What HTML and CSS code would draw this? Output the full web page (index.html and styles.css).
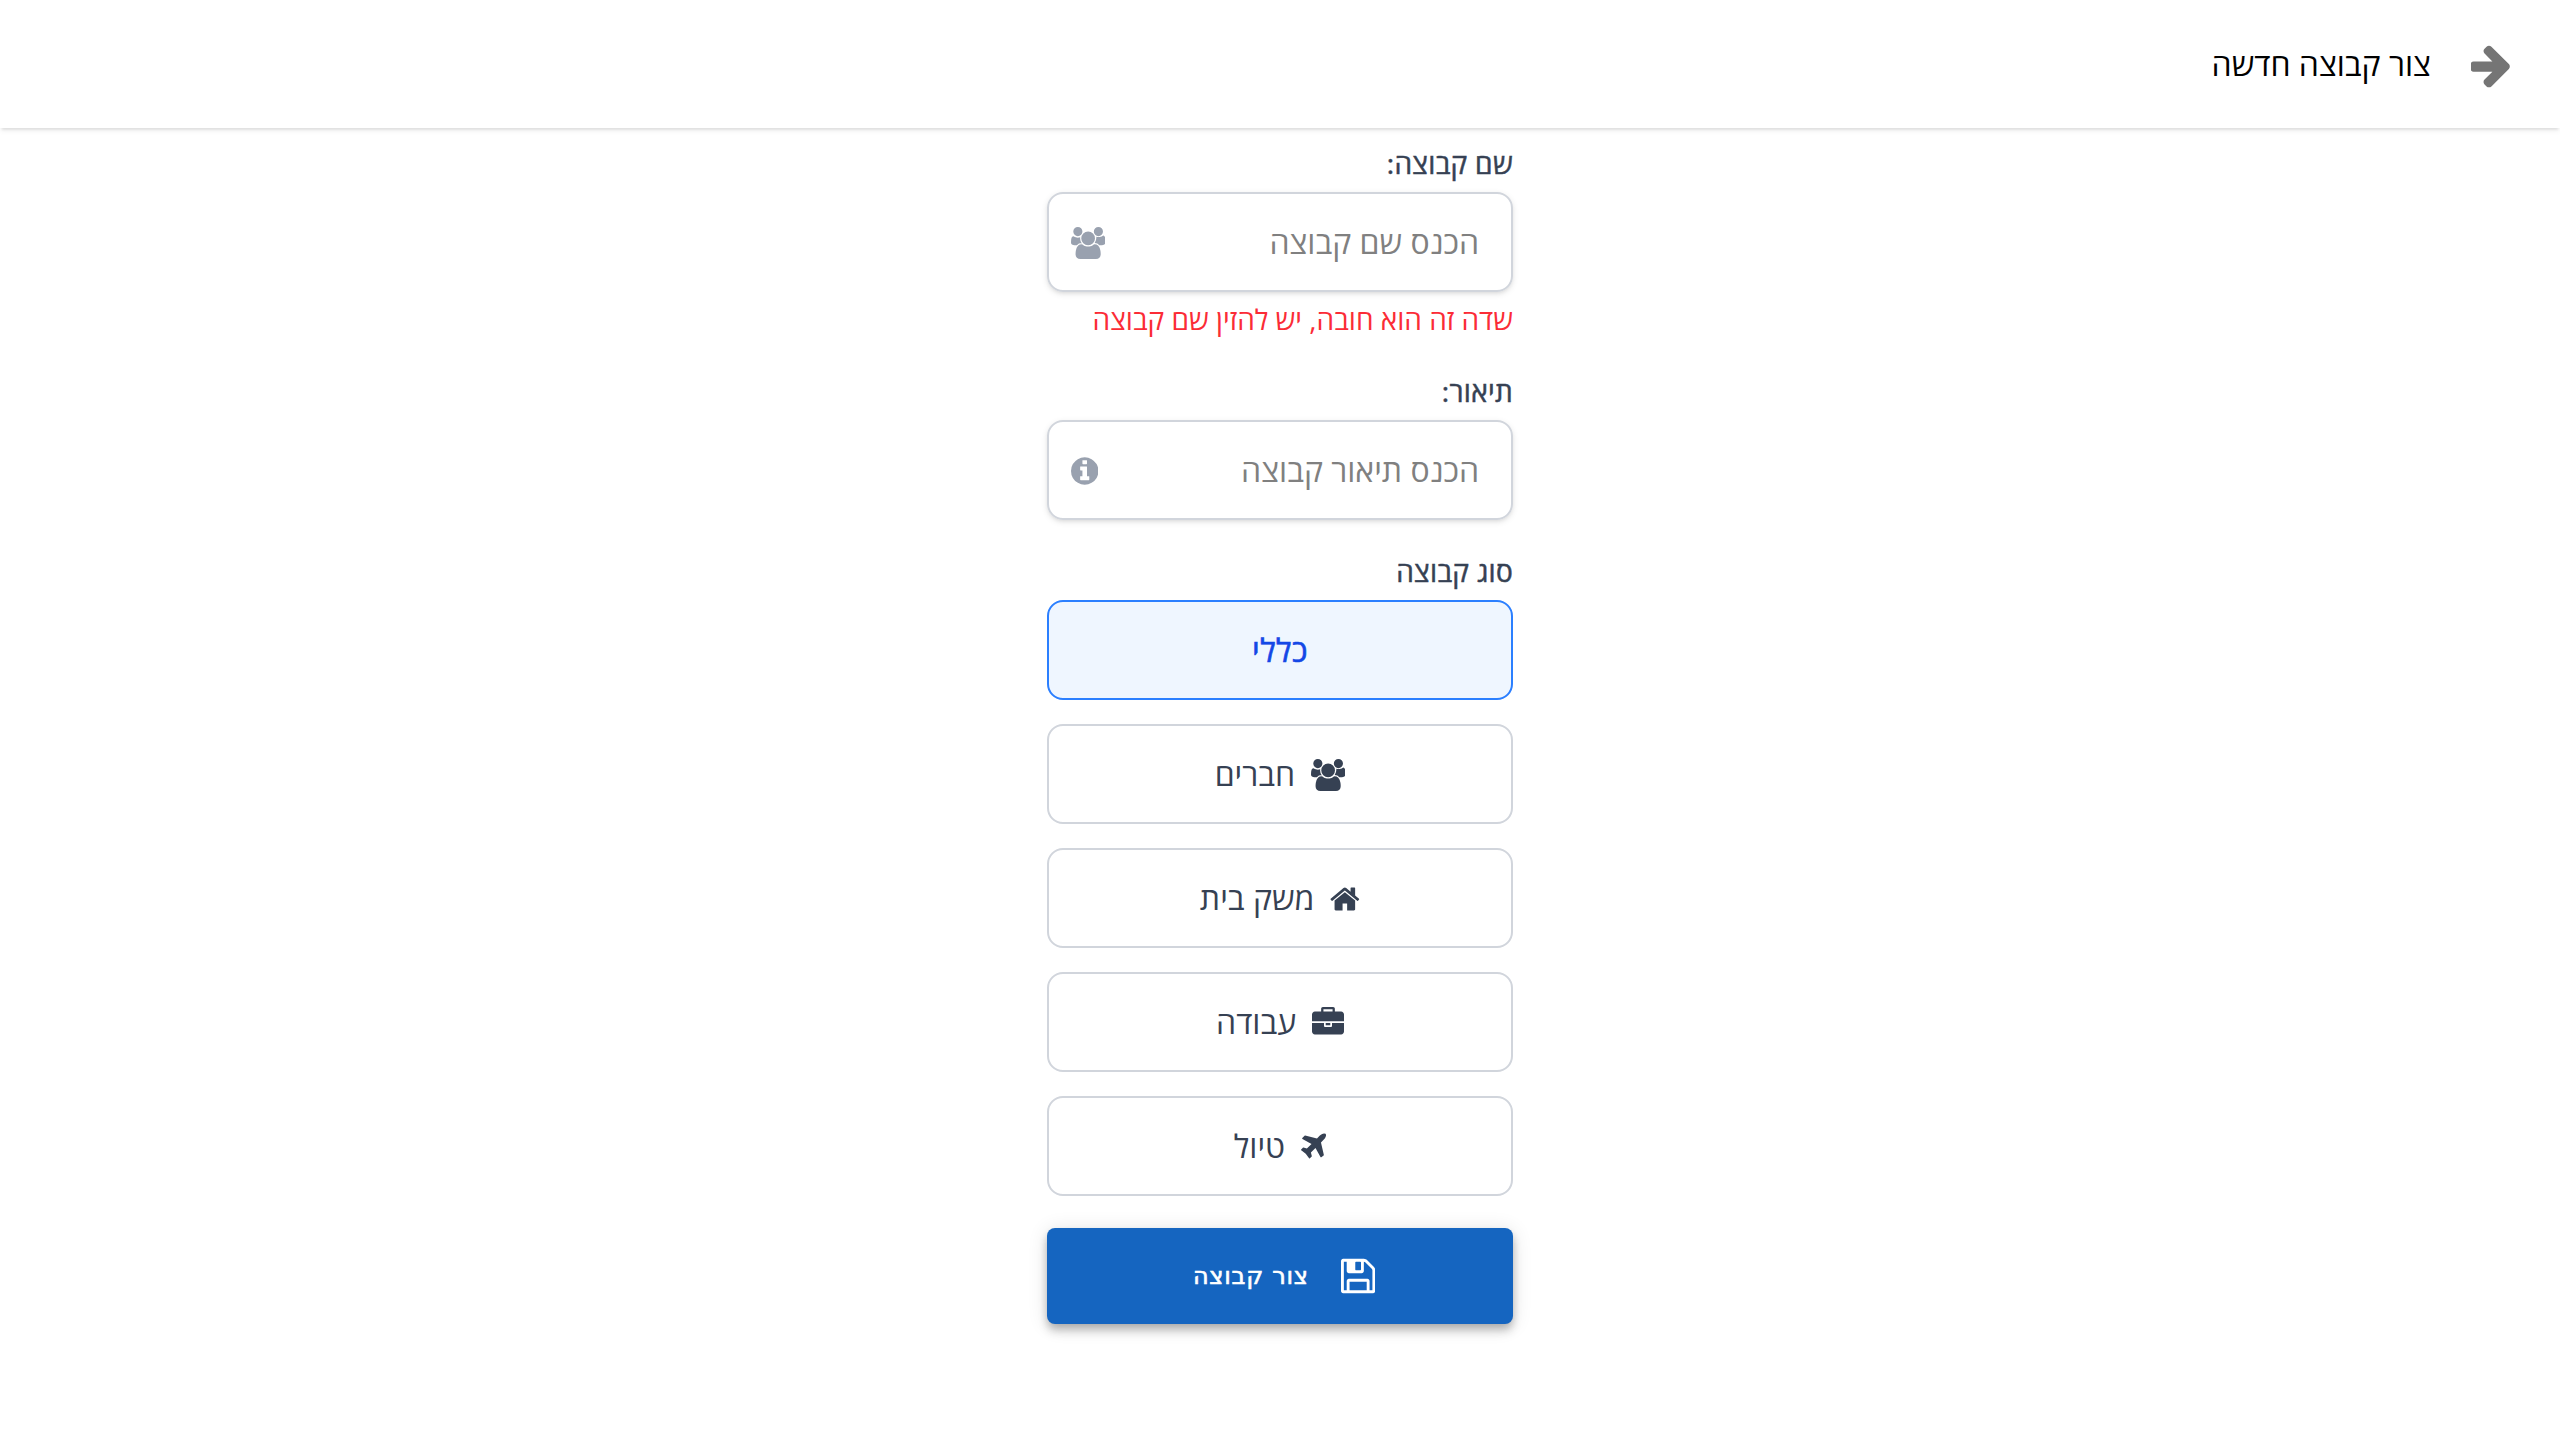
FILE: index.html
```html
<!DOCTYPE html>
<html lang="he" dir="rtl">
<head>
<meta charset="utf-8">
<title>צור קבוצה חדשה</title>
<link rel="stylesheet" href="styles.css">
</head>
<body>
<svg class="sprite" aria-hidden="true">
  <symbol id="users" viewBox="64 0 1920 1792"><path d="M657 896q-162 5-265 128h-134q-82 0-138-40.500t-56-118.500q0-353 124-353 6 0 43.500 21t97.500 42.500 119 21.500q67 0 133-23-5 37-5 66 0 159 93 290zm1071 637q0 120-73 189.500t-194 69.500h-874q-121 0-194-69.500t-73-189.500q0-53 3.500-103.500t14-109 26.500-108.500 43-97.500 62-81 85.500-53.500 111.500-20q10 0 43 21.500t73 48 107 48 135 21.500 135-21.500 107-48 73-48 43-21.500q61 0 111.500 20t85.500 53.500 62 81 43 97.500 26.500 108.500 14 109 3.500 103.500zm-1024-1277q0 106-75 181t-181 75-181-75-75-181 75-181 181-75 181 75 75 181zm704 384q0 159-112.500 271.500t-271.500 112.500-271.500-112.500-112.500-271.500 112.500-271.500 271.500-112.500 271.500 112.500 112.500 271.500zm576 225q0 78-56 118.500t-138 40.500h-134q-103-123-265-128 93-131 93-290 0-29-5-66 66 23 133 23 59 0 119-21.500t97.500-42.500 43.500-21q124 0 124 353zm-128-609q0 106-75 181t-181 75-181-75-75-181 75-181 181-75 181 75 75 181z"/></symbol>
  <symbol id="info" viewBox="128 0 1536 1792"><path d="M1152 1376v-160q0-14-9-23t-23-9h-96v-512q0-14-9-23t-23-9h-320q-14 0-23 9t-9 23v160q0 14 9 23t23 9h96v320h-96q-14 0-23 9t-9 23v160q0 14 9 23t23 9h448q14 0 23-9t9-23zm-128-896v-160q0-14-9-23t-23-9h-192q-14 0-23 9t-9 23v160q0 14 9 23t23 9h192q14 0 23-9t9-23zm640 416q0 209-103 385.500t-279.500 279.500-385.500 103-385.500-103-279.500-279.500-103-385.500 103-385.500 279.500-279.500 385.500-103 385.500 103 279.500 279.500 103 385.500z"/></symbol>
  <symbol id="home" viewBox="64 0 1664 1792"><path d="M1472 992v480q0 26-19 45t-45 19h-384v-384h-256v384h-384q-26 0-45-19t-19-45v-480q0-1 .5-3t.5-3l575-474 575 474q1 2 1 6zm223-69l-62 74q-8 9-21 11h-3q-13 0-21-7l-692-577-692 577q-12 8-24 7-13-2-21-11l-62-74q-8-10-7-23.500t11-21.500l719-599q32-26 76-26t76 26l244 204v-195q0-14 9-23t23-9h192q14 0 23 9t9 23v408l219 182q10 8 11 21.500t-7 23.500z"/></symbol>
  <symbol id="briefcase" viewBox="0 0 1792 1792"><path d="M640 256h512v-128h-512v128zm1152 640v480q0 66-47 113t-113 47h-1472q-66 0-113-47t-47-113v-480h672v160q0 26 19 45t45 19h320q26 0 45-19t19-45v-160h672zm-768 0v128h-256v-128h256zm768-480v384h-1792v-384q0-66 47-113t113-47h352v-160q0-40 28-68t68-28h576q40 0 68 28t28 68v160h352q66 0 113 47t47 113z"/></symbol>
  <symbol id="plane" viewBox="192 0 1408 1792"><path d="M1568 160q44 52 12 148t-108 172l-161 161 160 696q5 19-12 33l-128 96q-7 6-19 6-4 0-7-1-15-3-21-16l-279-508-259 259 53 194q5 17-8 31l-96 96q-9 9-23 9h-2q-15-2-24-13l-189-252-252-189q-11-7-13-23-1-13 9-25l96-97q9-9 23-9 6 0 8 1l194 53 259-259-508-279q-14-8-17-24-2-16 9-27l128-128q14-13 30-8l665 159 160-160q76-76 172-108t148 12z"/></symbol>
  <symbol id="save" viewBox="128 0 1536 1792"><path d="M512 1536h768v-384h-768v384zm896 0h128v-896q0-14-10-38.500t-20-34.500l-281-281q-10-10-34-20t-39-10v416q0 40-28 68t-68 28h-576q-40 0-68-28t-28-68v-416h-128v1280h128v-416q0-40 28-68t68-28h832q40 0 68 28t28 68v416zm-384-928v-320q0-13-9.500-22.500t-22.500-9.500h-192q-13 0-22.500 9.500t-9.500 22.500v320q0 13 9.500 22.500t22.500 9.500h192q13 0 22.500-9.500t9.500-22.500zm640 32v928q0 40-28 68t-68 28h-1344q-40 0-68-28t-28-68v-1344q0-40 28-68t68-28h928q40 0 88 20t76 48l280 280q28 28 48 76t20 88z"/></symbol>
  <symbol id="arrow" viewBox="150 -30 1536 1792"><path d="M1600 960q0 54-37 91l-651 651q-39 37-91 37-51 0-90-37l-75-75q-38-38-38-91t38-91l293-293h-704q-52 0-84.500-37.500t-32.500-90.500v-128q0-53 32.500-90.500t84.500-37.500h704l-293-294q-38-36-38-90t38-90l75-75q38-38 90-38 53 0 91 38l651 651q37 35 37 90z"/></symbol>
</svg>

<header class="topbar">
  <button class="back" type="button" aria-label="חזרה"><svg class="icon icon-arrow"><use href="#arrow"/></svg></button>
  <h1 class="title">צור קבוצה חדשה</h1>
</header>

<main>
  <form class="form" novalidate>
    <div class="field">
      <label class="label" for="name">שם קבוצה:</label>
      <div class="control">
        <input class="input" id="name" type="text" placeholder="הכנס שם קבוצה">
        <svg class="icon icon-users"><use href="#users"/></svg>
      </div>
      <p class="error">שדה זה הוא חובה, יש להזין שם קבוצה</p>
    </div>
    <div class="field">
      <label class="label" for="description">תיאור:</label>
      <div class="control">
        <input class="input" id="description" type="text" placeholder="הכנס תיאור קבוצה">
        <svg class="icon icon-info"><use href="#info"/></svg>
      </div>
    </div>
    <div class="field">
      <span class="label">סוג קבוצה</span>
      <div class="options">
        <button class="option selected" type="button">כללי</button>
        <button class="option" type="button"><svg class="icon icon-users"><use href="#users"/></svg>חברים</button>
        <button class="option" type="button"><svg class="icon icon-home"><use href="#home"/></svg>משק בית</button>
        <button class="option" type="button"><svg class="icon icon-briefcase"><use href="#briefcase"/></svg>עבודה</button>
        <button class="option" type="button"><svg class="icon icon-plane"><use href="#plane"/></svg>טיול</button>
      </div>
    </div>
    <button class="submit" type="button"><svg class="icon icon-save"><use href="#save"/></svg>צור קבוצה</button>
  </form>
</main>
</body>
</html>
```
FILE: styles.css
```css
*,
*::before,
*::after {
  box-sizing: border-box;
}

body {
  min-height: 100vh;
  margin: 0;
  background: #fff;
  font-family: "Open Sans", "Noto Sans", sans-serif;
  font-size: 32px;
  line-height: 48px;
}

button,
input {
  font: inherit;
}

.sprite {
  display: none;
}

.icon {
  display: block;
  flex: none;
  height: 32px;
  margin-top: 1px;
  fill: currentColor;
}

.icon-users { width: 34.28px; }
.icon-info { width: 27.43px; }
.icon-home { width: 29.71px; }
.icon-briefcase { width: 32px; }
.icon-plane { width: 25.14px; }
.icon-save { width: 34.28px; height: 40px; margin-top: 0; }
.icon-arrow { width: 41.14px; height: 48px; margin-top: 0; }

.topbar {
  display: flex;
  align-items: center;
  gap: 40px;
  height: 128px;
  padding: 0 48px;
  background: #fff;
  box-shadow: 0 4px 2px -2px rgba(0, 0, 0, 0.07), 0 2px 6px rgba(0, 0, 0, 0.08);
}

.back {
  display: flex;
  padding: 0;
  border: 0;
  background: none;
  color: #757575;
}

.title {
  margin: 0;
  font-size: 32px;
  font-weight: 400;
  color: #000;
}

.form {
  display: flex;
  flex-direction: column;
  gap: 32px;
  width: 466px;
  margin: 0 auto;
  padding: 16px 0 64px;
}

.field {
  display: flex;
  flex-direction: column;
  gap: 8px;
}

.label {
  height: 40px;
  font-size: 28px;
  line-height: 38px;
  letter-spacing: 0.3px;
  -webkit-text-stroke: 0.5px currentColor;
  color: #364153;
}

.control {
  display: flex;
  align-items: center;
  height: 100px;
  padding: 0 32px 0 22px;
  border: 2px solid #d1d5dc;
  border-radius: 16px;
  color: #99a1af;
  box-shadow: 0 2px 6px rgba(0, 0, 0, 0.1), 0 2px 4px -2px rgba(0, 0, 0, 0.1);
}

.input {
  flex: 1;
  min-width: 0;
  padding: 0;
  border: 0;
  outline: 0;
  background: none;
  color: #364153;
}

.input::placeholder {
  color: #808080;
  opacity: 1;
}

.error {
  height: 40px;
  margin: 0;
  font-size: 28px;
  line-height: 38px;
  color: #fb2c36;
}

.options {
  display: grid;
  gap: 24px;
}

.option {
  display: flex;
  align-items: center;
  justify-content: center;
  gap: 16px;
  height: 100px;
  padding: 0;
  border: 2px solid #d1d5dc;
  border-radius: 16px;
  background: #fff;
  color: #364153;
}

.selected {
  border-color: #2b7fff;
  background: #eff6ff;
  letter-spacing: 0.4px;
  -webkit-text-stroke: 0.6px currentColor;
  color: #1447e6;
}

.submit {
  display: flex;
  align-items: center;
  justify-content: center;
  gap: 32px;
  height: 96px;
  padding: 0 0 0 8px;
  border: 0;
  border-radius: 8px;
  background: #1565c0;
  color: #fff;
  font-family: "DejaVu Sans", sans-serif;
  font-size: 24px;
  font-weight: 500;
  letter-spacing: 0.03em;
  -webkit-text-stroke: 0.6px currentColor;
  box-shadow: 0 4px 8px -2px rgba(0, 0, 0, 0.2), 0 8px 10px rgba(0, 0, 0, 0.14), 0 2px 20px rgba(0, 0, 0, 0.12);
}
```
